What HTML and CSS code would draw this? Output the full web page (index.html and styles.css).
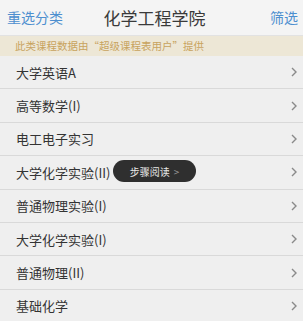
FILE: index.html
```html
<!DOCTYPE html>
<html lang="zh">
<head>
<meta charset="utf-8">
<link rel="stylesheet" href="styles.css">
</head>
<body>
<div class="app">
  <header class="topbar">
    <span class="link">重选分类</span>
    <span class="title">化学工程学院</span>
    <span class="link right">筛选</span>
  </header>
  <div class="notice">此类课程数据由“超级课程表用户”提供</div>
  <ul class="list">
    <li class="row"><span>大学英语A</span><svg class="chev" viewBox="0 0 6 10"><polyline points="1,1 5,5 1,9"/></svg></li>
    <li class="row"><span>高等数学(I)</span><svg class="chev" viewBox="0 0 6 10"><polyline points="1,1 5,5 1,9"/></svg></li>
    <li class="row"><span>电工电子实习</span><svg class="chev" viewBox="0 0 6 10"><polyline points="1,1 5,5 1,9"/></svg></li>
    <li class="row"><span>大学化学实验(II)</span><svg class="chev" viewBox="0 0 6 10"><polyline points="1,1 5,5 1,9"/></svg><span class="pill">步骤阅读 <b>&gt;</b></span></li>
    <li class="row"><span>普通物理实验(I)</span><svg class="chev" viewBox="0 0 6 10"><polyline points="1,1 5,5 1,9"/></svg></li>
    <li class="row"><span>大学化学实验(I)</span><svg class="chev" viewBox="0 0 6 10"><polyline points="1,1 5,5 1,9"/></svg></li>
    <li class="row"><span>普通物理(II)</span><svg class="chev" viewBox="0 0 6 10"><polyline points="1,1 5,5 1,9"/></svg></li>
    <li class="row"><span>基础化学</span><svg class="chev" viewBox="0 0 6 10"><polyline points="1,1 5,5 1,9"/></svg></li>
  </ul>
</div>
</body>
</html>
```
FILE: styles.css
```css
* { box-sizing: border-box; margin: 0; padding: 0; }
html, body { width: 303px; height: 321px; overflow: hidden; }
body {
  background: #efefef;
  font-family: "Noto Sans CJK SC", "Liberation Sans", sans-serif;
  color: #333;
}
.app { display: flex; flex-direction: column; }
.topbar {
  height: 36px;
  background: #f4f4f4;
  display: grid;
  grid-template-columns: 1fr auto 1fr;
  align-items: center;
  padding: 0 5px 1px 7px;
  border-bottom: 1px solid #e2e2e2;
}
.link { color: #4d8fcf; font-size: 14px; }
.link.right { justify-self: end; }
.title { font-size: 17px; color: #3a3a3a; margin-left: 4px; }
.notice {
  height: 20px;
  background: #ede7d6;
  color: #c8a35e;
  font-size: 10.5px;
  line-height: 20px;
  padding-left: 15px;
}
.list { list-style: none; }
.row {
  position: relative;
  height: 33.4px;
  display: flex;
  align-items: center;
  justify-content: space-between;
  padding: 0 6px 0 16px;
  border-bottom: 1px solid #d9d9d9;
  font-size: 13px;
  color: #333;
  background: #efefef;
}
.chev {
  width: 6px; height: 10px;
  fill: none;
  stroke: #8a8a8a;
  stroke-width: 1.4;
}
.pill {
  position: absolute;
  left: 113px;
  top: 4px;
  height: 22px;
  width: 83px;
  border-radius: 11px;
  background: #2f2f2f;
  color: #e6e6e6;
  font-size: 10px;
  display: flex;
  align-items: center;
  justify-content: center;
  gap: 4px;
}
.pill b { font-weight: normal; color: #999; font-size: 10px; }
```
